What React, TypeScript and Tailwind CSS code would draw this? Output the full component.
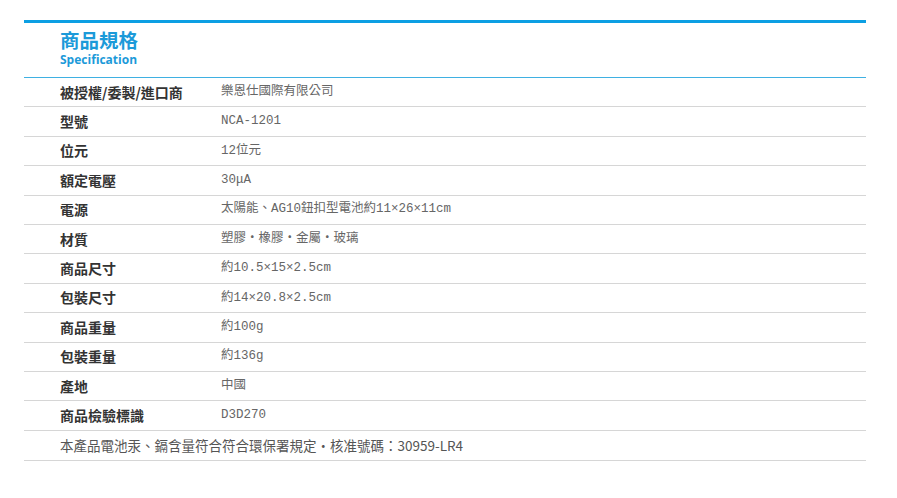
const specs: { label: string; value: string }[] = [
  { label: "被授權/委製/進口商", value: "樂恩仕國際有限公司" },
  { label: "型號", value: "NCA-1201" },
  { label: "位元", value: "12位元" },
  { label: "額定電壓", value: "30μA" },
  { label: "電源", value: "太陽能、AG10鈕扣型電池約11×26×11cm" },
  { label: "材質", value: "塑膠・橡膠・金屬・玻璃" },
  { label: "商品尺寸", value: "約10.5×15×2.5cm" },
  { label: "包裝尺寸", value: "約14×20.8×2.5cm" },
  { label: "商品重量", value: "約100g" },
  { label: "包裝重量", value: "約136g" },
  { label: "產地", value: "中國" },
  { label: "商品檢驗標識", value: "D3D270" },
]

export default function App() {
  return (
    <div className="w-[897px] h-[498px] bg-white pt-[20px]">
      <div className="ml-[24px] w-[842px] border-t-[3px] border-[#0c9fe3]">
        {/* header */}
        <div className="px-[36px] pt-[6px] pb-[10px]">
          <h2 className="text-[19.5px] leading-[21px] font-bold text-[#1c9ad9] font-['Noto_Sans_CJK_TC',sans-serif]">
            商品規格
          </h2>
          <p className="text-[12px] leading-[14px] mt-[3px] font-bold text-[#1c9ad9] font-['Open_Sans',sans-serif]">
            Specification
          </p>
        </div>
        <div className="h-px bg-[#3fb0e2]" />

        {/* rows */}
        <div className="flex flex-col">
          {specs.map((s) => (
            <div key={s.label} className="flex items-center h-[29.4px] pl-[36px] border-b border-[#d6d6d6]">
              <div className="w-[161px] text-[14px] font-bold text-[#333] font-['Noto_Sans_CJK_TC',sans-serif]">
                {s.label}
              </div>
              <div className="text-[12.5px] text-[#666] font-['Liberation_Mono','Noto_Sans_CJK_TC',monospace]">
                {s.value}
              </div>
            </div>
          ))}
          <div className="flex items-center h-[30.7px] pl-[36px] border-b border-[#d6d6d6] text-[13.5px] text-[#555] font-['Noto_Sans_CJK_TC',sans-serif]">
            本產品電池汞、鎘含量符合符合環保署規定・核准號碼：30959-LR4
          </div>
        </div>
      </div>
    </div>
  )
}
